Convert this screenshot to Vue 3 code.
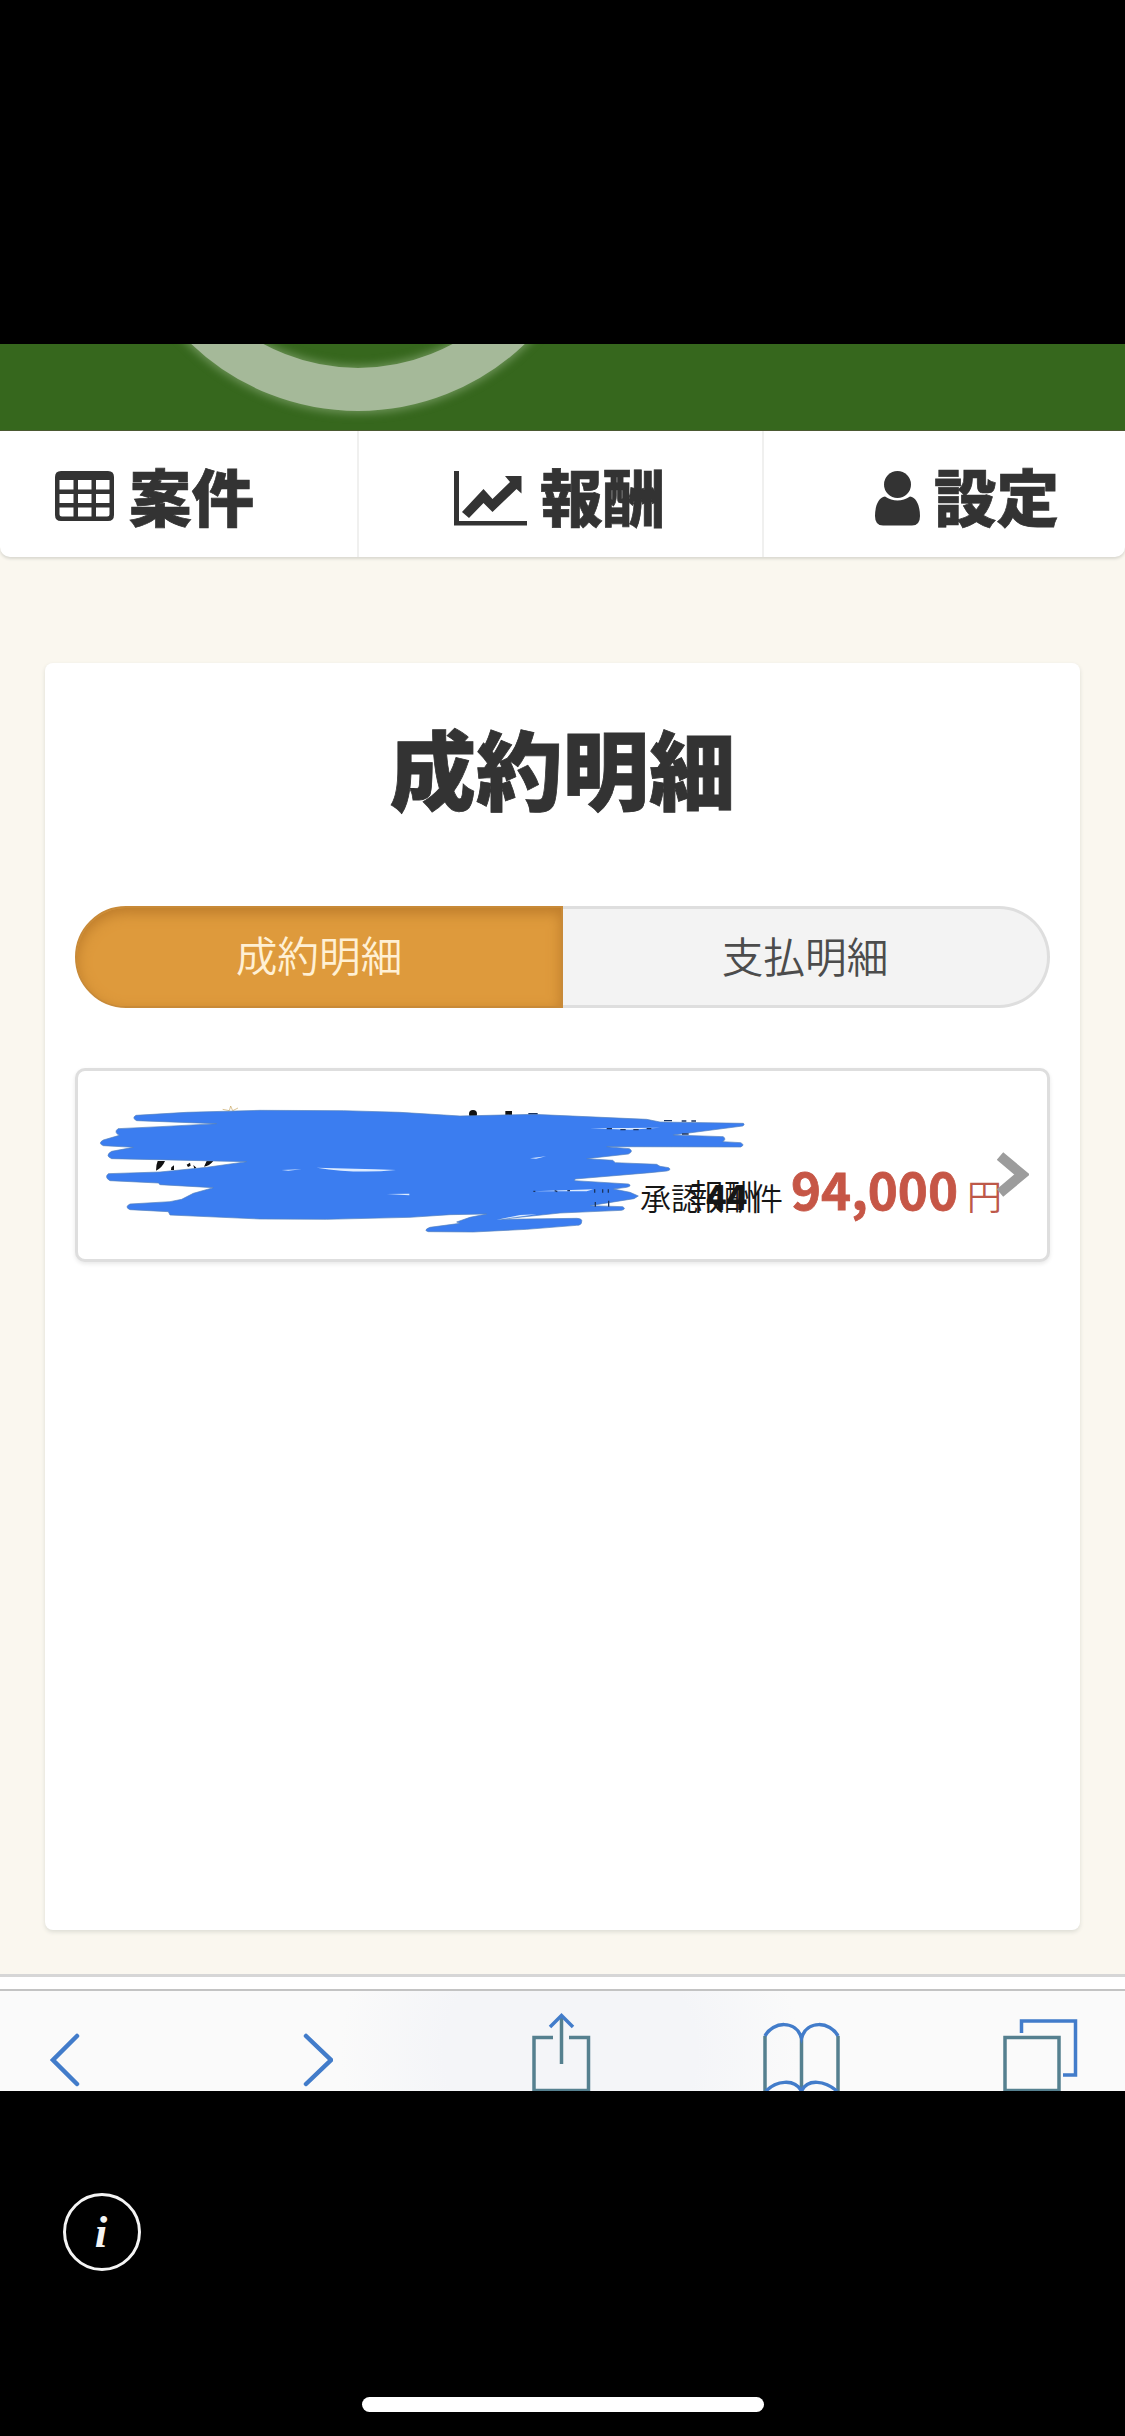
<script setup>
const tabs = [
  { label: '成約明細', active: true },
  { label: '支払明細', active: false },
]
</script>

<template>
  <div class="screen">
    <header class="banner">
      <svg width="1125" height="87" viewBox="0 344 1125 87">
        <circle class="ring-glow" cx="358" cy="170" r="219.5" />
        <circle class="ring" cx="358" cy="170" r="219.5" />
      </svg>
    </header>

    <main class="page">
      <nav class="nav">
        <a class="nav-item first">
          <svg class="grid-icon" width="59" height="51" viewBox="0 0 59 51">
            <path fill-rule="evenodd" d="M6 0H53Q59 0 59 6V44Q59 50 53 50H6Q0 50 0 44V6Q0 0 6 0ZM4.500 9V18.500H18.500V9ZM23 9V18.500H36.500V9ZM41 9V18.500H54.500V9ZM4.500 23V32H18.500V23ZM23 23V32H36.500V23ZM41 23V32H54.500V23ZM4.500 36.500V43Q4.500 45.500 7 45.500H18.500V36.500ZM23 36.500V45.500H36.500V36.500ZM41 36.500V45.500H52Q54.500 45.500 54.500 43V36.500Z" />
          </svg>
          <span>案件</span>
        </a>
        <a class="nav-item second">
          <svg width="73" height="55" viewBox="0 0 73 55">
            <path d="M0 0H5V50H73V54.500H0ZM8 41L29.500 18L38.500 28L56 11L51 5H67.500V22.500L62.500 18L38.500 41L29.500 32L15 47Z" />
          </svg>
          <span>報酬</span>
        </a>
        <a class="nav-item third">
          <svg width="46" height="55" viewBox="0 0 46 55">
            <ellipse cx="22.500" cy="13.500" rx="13.500" ry="13.500" />
            <path d="M10 25.500Q16 29.500 22.500 29.500T35 25.500C42 26.500 45 36 45 45Q45 54.500 37 54.500H8Q0 54.500 0 45C0 36 3 26.500 10 25.500Z" />
          </svg>
          <span>設定</span>
        </a>
      </nav>

      <section class="card">
        <h1>成約明細</h1>
        <div class="tabs">
          <button v-for="t in tabs" :key="t.label" :class="['tab', { active: t.active }]">{{ t.label }}</button>
        </div>
        <article class="entry">
          <svg class="marker" width="969" height="188" viewBox="54 63 2907 564">
            <path class="spark" d="M488 178l20 4 4-14 6 14 16-8" />
            <g class="ink">
              <path d="M293 333h22q-8 20-27 29 0-18 5-29ZM334 352l8-6v14h-9ZM380 344l10-6 2 9-8 4ZM400 345l9 8-6 4ZM432 350l8-17h20q-12 15-28 17Z" />
              <circle cx="1239" cy="192" r="12" />
              <path d="M1336 183h20v14h-20Z" />
            </g>
            <path class="scribble" d="M228 196L380 187L600 181L850 182L1020 187L1200 198L1420 193L1760 208L1800 216L2050 220Q2056 224 2048 228L1840 255L1990 260Q2000 268 1988 275L2042 278Q2056 285 2042 291L1640 290L1708 296Q1722 304 1705 312L1580 326L1658 331L1666 338L1790 343L1800 349L1826 353Q1836 360 1820 363L1770 368L1545 387L1544 392L1705 402Q1718 407 1700 412L1660 417L1710 427L1735 438L1722 446L1590 467L1688 470Q1700 477 1685 481L1500 489L1320 508L1550 505Q1568 506 1565 515Q1565 526 1550 526L1400 538L1240 546L1105 545Q1088 541 1110 532L1200 520L1190 516L1230 502L1280 492L1170 494L1050 502L800 508L600 507L330 495L325 485L210 479Q192 471 210 462L330 455L365 448L400 430L460 413L300 404L295 399L150 392Q132 382 145 371L300 366L440 352L560 335L155 326Q133 317 155 304L220 292L130 287Q112 280 130 270L178 256Q160 247 174 236L300 230L470 221L230 212Q214 204 228 196Z" />
            <path class="gap" d="M770 353Q880 355 1008 360Q890 372 770 353ZM665 360l60-2-40 4ZM980 432l68-1v5ZM1410 325l48-6-30 7ZM1420 424l180-6-20 6ZM1590 235l210-2-90 6ZM1308 510L1430 493L1380 495Z" />
            <path class="thread" d="M1640 236h16M1681 239h16M1720 239h16M1760 236h14M1812 212h24M1865 213h14M1894 213h14M1866 252h20M1420 424h6M1484 422l8 3M1522 422h8M1604 418v10M1628 418v10M1645 418v10M1606 456v14M1646 452v18M1405 191h28" />
          </svg>
          <div class="meta">
            <span class="approved">承認</span>
            <b class="count">44</b>
            <span class="reward">報酬</span>
            <span class="unit">件</span>
            <b class="amount">94,000</b>
            <span class="yen">円</span>
          </div>
          <svg class="chevron" width="32" height="48" viewBox="0 0 32 48">
            <path d="M3 5L25 23.500L3 42" />
          </svg>
        </article>
      </section>
    </main>

    <div class="divider"></div>
    <footer class="toolbar">
      <svg class="back" width="30" height="100" viewBox="50 1991 30 100"><path d="M77 2036L53 2060L77 2084" /></svg>
      <svg class="forward" width="30" height="100" viewBox="303 1991 30 100"><path d="M306 2036L331 2060L306 2084" /></svg>
      <svg class="share" width="60" height="100" viewBox="531 1991 60 100">
        <path class="teal" d="M553 2037.500H534V2090.500H588.500V2037.500H569" />
        <path class="teal" d="M561.500 2016V2064" /><path d="M550 2027L561.500 2015.500L573 2027" />
      </svg>
      <svg class="book" width="78" height="100" viewBox="762 1991 78 100">
        <path class="teal" d="M765 2036V2091M801.500 2036V2091M838 2036V2091" />
        <path d="M765 2036C773 2021 796 2020 801.500 2038C807 2020 830 2021 838 2036M766 2091C776 2081 794 2078 801.500 2091C808 2078 825 2081 837 2091" />
      </svg>
      <svg class="pages" width="76" height="100" viewBox="1002 1991 76 100">
        <rect class="teal" x="1005" y="2037.500" width="54" height="53" />
        <path d="M1021.500 2033V2021H1075.500V2075H1063" />
      </svg>
    </footer>

    <div class="bottom">
      <div class="info"><span>i</span></div>
      <div class="home"></div>
    </div>
  </div>
</template>

<style>
body { background: #000; }
</style>

<style scoped>
* { box-sizing: border-box; }
.screen {
  width: 1125px;
  height: 2436px;
  padding-top: 344px;
  overflow: hidden;
  background: #000;
  color: #333;
  font-family: "Noto Sans CJK JP", sans-serif;
  display: flex;
  flex-direction: column;
}
svg { display: block; flex: none; }
.banner { height: 87px; background: #36671d; border-bottom: 1px solid #45542b; }
.ring { fill: none; stroke: #a5b999; stroke-width: 43; }
.ring-glow { fill: none; stroke: #6d9358; stroke-width: 48; filter: blur(4px); }
.page { height: 1543px; background: #faf7ef; }
.nav {
  display: flex;
  height: 126px;
  background: #fff;
  border-radius: 0 0 10px 10px;
  box-shadow: 0 2px 3px #d9d8d0;
}
.nav-item {
  display: flex;
  align-items: flex-start;
  padding-top: 40px;
  font-size: 62.500px;
  font-weight: 900;
  line-height: 62px;
  border-right: 2px solid #f0f0ef;
}
.nav-item svg { fill: #333; }
.nav-item span { margin-top: -7px; -webkit-text-stroke: 0.700px #333; }
.first { width: 359px; padding-left: 55px; }
.first span { margin-left: 15px; }
.second { width: 405px; padding-left: 95px; }
.second span { margin-left: 13px; }
.third { width: 361px; padding-left: 111px; border: 0; }
.third span { margin-left: 13px; }
.card {
  width: 1035px;
  height: 1267px;
  margin: 106px 0 0 45px;
  padding: 0 30px;
  background: #fff;
  border-radius: 8px;
  box-shadow: 0 2px 4px #dcdcd4;
}
h1 {
  margin: 0;
  padding-top: 61px;
  height: 243px;
  font-size: 86.500px;
  font-weight: 900;
  line-height: 86px;
  text-align: center;
  -webkit-text-stroke: 0.800px #333;
}
.tabs { display: flex; height: 102px; width: 975px; }
.tab {
  flex: 1;
  padding: 0 0 6px;
  font: 350 41.700px/92px "Noto Sans CJK JP", sans-serif;
  color: #4c4c4c;
  background: #f3f3f3;
  border: 3px solid #dedede;
  border-left: 0;
  border-radius: 0 51px 51px 0;
}
.tab.active {
  color: #fff0d4;
  background: #de9a3c;
  border: 2px solid #c88a38;
  border-radius: 51px 0 0 51px;
  box-shadow: inset 0 5px 13px #bd7c2b;
}
.entry {
  position: relative;
  margin-top: 60px;
  height: 194px;
  border: 3px solid #dedede;
  border-radius: 10px;
  background: #fff;
  box-shadow: 0 2px 4px #e8e8e8;
}
.marker { position: absolute; left: 0; top: 0; }
.scribble { fill: #3b7df0; stroke: #5380bd; stroke-width: 2; stroke-linejoin: round; }
.spark { fill: none; stroke: #c7a45d; stroke-width: 2; }
.ink { fill: #111; }
.gap { fill: #dcebff; }
.thread { fill: none; stroke: #1c3560; stroke-width: 4; }
.meta {
  position: relative;
  display: flex;
  align-items: baseline;
  padding: 87px 0 0 562px;
  line-height: 60px;
  white-space: nowrap;
  color: #161616;
}
.meta > * { flex: none; }
.approved { font-size: 31px; font-weight: 350; }
.count { width: 40px; margin-left: 4px; font-size: 34px; font-weight: 900; }
.reward { width: 68px; margin-left: -57px; font-size: 35px; font-weight: 350; }
.unit { width: 30px; margin-left: -5px; font-size: 31px; font-weight: 350; }
.amount { width: 166px; margin-left: 9px; font-size: 51px; font-weight: 700; color: #c65646; -webkit-text-stroke: 0.800px #c65646; }
.yen { margin-left: 10px; font-size: 35px; font-weight: 350; color: #bd5849; }
.chevron { position: absolute; left: 919px; top: 80px; fill: none; stroke: #9c9c9c; stroke-width: 10; }
.divider { height: 17px; background: #fff; border-top: 3px solid #d6d6d6; border-bottom: 2px solid #c3c3c3; }
.toolbar {
  display: flex;
  height: 100px;
  background: radial-gradient(ellipse 230px 200px at 570px 60px, #f4f5f8 55%, #fafafa 100%);
}
.toolbar svg { fill: none; stroke: #427cca; stroke-width: 3.500; }
.toolbar .back, .toolbar .forward { stroke-width: 4.500; stroke-linecap: round; }
.toolbar .teal { stroke: #55808f; }
.back { margin-left: 50px; }
.forward { margin-left: 223px; }
.share { margin-left: 198px; }
.book { margin-left: 171px; }
.pages { margin-left: 162px; }
.bottom { height: 345px; padding: 102px 0 0 63px; background: #000; }
.info {
  display: flex;
  justify-content: center;
  width: 78px;
  height: 78px;
  padding-right: 2px;
  border: 3px solid #f4f4f4;
  border-radius: 50%;
  color: #f4f4f4;
  font: italic 600 45px/73px "Liberation Serif", serif;
}
.home { width: 402px; height: 15px; margin: 126px 0 0 299px; background: #fff; border-radius: 8px; }
</style>
